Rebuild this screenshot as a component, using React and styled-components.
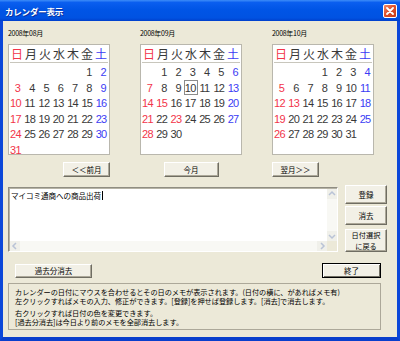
import React from "react";
import styled, { createGlobalStyle } from "styled-components";

const JP = `"Noto Sans CJK JP", "Noto Sans", sans-serif`;

const GlobalStyle = createGlobalStyle`
  body {
    margin: 0;
    background: #ffffff;
    font-family: ${JP};
  }
`;

const HOLIDAYS = {
  "2008-9": [15, 23],
  "2008-10": [13],
};

const WEEK = ["日", "月", "火", "水", "木", "金", "土"];

const buildMonth = (year, month) => {
  const first = new Date(year, month - 1, 1).getDay();
  const last = new Date(year, month, 0).getDate();
  const cells = [];
  for (let i = 0; i < first; i++) cells.push(null);
  for (let d = 1; d <= last; d++) cells.push(d);
  while (cells.length < 42) cells.push(null);
  return cells;
};

const dayTone = (year, month, day, col) => {
  const holidays = HOLIDAYS[`${year}-${month}`] || [];
  if (col === 0 || holidays.includes(day)) return "red";
  if (col === 6) return "blue";
  return "normal";
};

const Calendar = ({ year, month, today, align, button }) => {
  const cells = buildMonth(year, month);
  const mm = String(month).padStart(2, "0");
  return (
    <CalColumn $align={align}>
      <CalLabel>
        {year}年{mm}月
      </CalLabel>
      <CalBox>
        <HeadRow>
          {WEEK.map((w, i) => (
            <HeadCell key={w} $tone={i === 0 ? "red" : i === 6 ? "blue" : "normal"}>
              {w}
            </HeadCell>
          ))}
        </HeadRow>
        <DayGrid>
          {cells.map((d, i) => (
            <DayCell
              key={i}
              $tone={d ? dayTone(year, month, d, i % 7) : "normal"}
              $today={d === today}
            >
              {d || ""}
            </DayCell>
          ))}
        </DayGrid>
      </CalBox>
      <Button $w={button.width} $h={15}>
        {button.label}
      </Button>
    </CalColumn>
  );
};

const Chevron = ({ dir }) => {
  const paths = {
    up: "M2 6 L5 3 L8 6",
    down: "M2 4 L5 7 L8 4",
    left: "M6 2 L3 5 L6 8",
    right: "M4 2 L7 5 L4 8",
  };
  return (
    <svg width="10" height="10" viewBox="0 0 10 10">
      <path d={paths[dir]} fill="none" stroke="#b9c3d6" strokeWidth="1.5" />
    </svg>
  );
};

const App = () => {
  return (
    <React.Fragment>
      <GlobalStyle />
      <Window>
        <TitleBar>
          <TitleText>カレンダー表示</TitleText>
          <CloseButton>
            <svg width="8" height="8" viewBox="0 0 8 8">
              <path d="M1 1 L7 7 M7 1 L1 7" stroke="#fff" strokeWidth="1.8" strokeLinecap="round" />
            </svg>
          </CloseButton>
        </TitleBar>
        <Client>
          <CalendarRow>
            <Calendar year={2008} month={8} align="flex-end" button={{ label: "＜＜前月", width: 47 }} />
            <Calendar year={2008} month={9} today={10} align="center" button={{ label: "今月", width: 55 }} />
            <Calendar year={2008} month={10} align="flex-start" button={{ label: "翌月＞＞", width: 47 }} />
          </CalendarRow>

          <MemoRow>
            <MemoBox>
              <MemoText>
                マイコミ通商への商品出荷<Caret />
              </MemoText>
              <VScroll>
                <ScrollArrow>
                  <Chevron dir="up" />
                </ScrollArrow>
                <ScrollTrack />
                <ScrollArrow>
                  <Chevron dir="down" />
                </ScrollArrow>
              </VScroll>
              <HScroll>
                <ScrollArrow>
                  <Chevron dir="left" />
                </ScrollArrow>
                <ScrollTrack />
                <ScrollArrow>
                  <Chevron dir="right" />
                </ScrollArrow>
              </HScroll>
              <ScrollCorner />
            </MemoBox>
            <SideButtons>
              <Button $w={42} $h={19}>登録</Button>
              <Button $w={42} $h={19}>消去</Button>
              <Button $w={42} $h={23} $gapTop={2} $twoLine>
                <span>日付選択</span>
                <span>に戻る</span>
              </Button>
            </SideButtons>
          </MemoRow>

          <BottomRow>
            <Button $w={77} $h={14}>過去分消去</Button>
            <Button $w={59} $h={15} $default>終了</Button>
          </BottomRow>

          <InfoBox>
            <InfoPara>
              カレンダーの日付にマウスを合わせるとその日のメモが表示されます。(日付の横に、があればメモ有)
              <br />
              左クリックすればメモの入力、修正ができます。[登録]を押せば登録します。[消去]で消去します。
            </InfoPara>
            <InfoPara>
              右クリックすれば日付の色を変更できます。
              <br />
              [過去分消去]は今日より前のメモを全部消去します。
            </InfoPara>
          </InfoBox>
        </Client>
      </Window>
    </React.Fragment>
  );
};

const Window = styled.div`
  display: flex;
  flex-direction: column;
  width: 400px;
  height: 341px;
  box-sizing: border-box;
`;

const TitleBar = styled.div`
  display: flex;
  align-items: center;
  justify-content: space-between;
  height: 21px;
  padding: 0 3px 0 5px;
  box-sizing: border-box;
  background: linear-gradient(
    to bottom,
    #3d8df8 0%,
    #0a5eef 12%,
    #0055e6 45%,
    #0052e2 85%,
    #0040cc 100%
  );
`;

const TitleText = styled.span`
  font-family: ${JP};
  font-size: 8.5px;
  font-weight: bold;
  color: #ffffff;
  text-shadow: 1px 1px 0 #0b2f9c;
  letter-spacing: -0.2px;
`;

const CloseButton = styled.div`
  display: flex;
  align-items: center;
  justify-content: center;
  width: 14px;
  height: 14px;
  box-sizing: border-box;
  border: 1px solid #ffffff;
  border-radius: 2px;
  background: linear-gradient(135deg, #f08a6a 0%, #e0522c 45%, #c33c16 100%);
`;

const Client = styled.div`
  flex: 1;
  display: flex;
  flex-direction: column;
  background: #ece9d8;
  border-left: 3px solid #0b47d9;
  border-right: 3px solid #0b47d9;
  border-bottom: 4px solid #0a3fcc;
  padding: 7px 0 0 5px;
  box-sizing: border-box;
`;

const CalendarRow = styled.div`
  display: grid;
  grid-template-columns: 102px 102px 102px;
  column-gap: 30px;
`;

const CalColumn = styled.div`
  display: flex;
  flex-direction: column;
  align-items: ${p => p.$align};
  & > button {
    margin-top: 7px;
  }
`;

const CalLabel = styled.div`
  align-self: flex-start;
  height: 10px;
  line-height: 10px;
  margin-bottom: 6px;
  font-family: ${JP};
  font-size: 7px;
  letter-spacing: -0.3px;
  color: #000000;
`;

const CalBox = styled.div`
  width: 102px;
  height: 111px;
  box-sizing: border-box;
  background: #ffffff;
  border: 1px solid #b9b7ad;
  overflow: hidden;
`;

const HeadRow = styled.div`
  display: grid;
  grid-template-columns: repeat(7, minmax(0, 1fr));
  height: 17px;
  border-bottom: 1px solid #c8c6bc;
  margin: 0 1px;
`;

const toneColor = {
  red: "#f2354a",
  blue: "#3b3cf4",
  normal: "#383838",
};

const HeadCell = styled.div`
  text-align: center;
  font-family: ${JP};
  font-size: 12px;
  line-height: 17px;
  color: ${p => toneColor[p.$tone]};
`;

const DayGrid = styled.div`
  display: grid;
  grid-template-columns: repeat(7, minmax(0, 1fr));
  grid-auto-rows: 15.5px;
  padding-top: 1px;
`;

const DayCell = styled.div`
  box-sizing: border-box;
  min-width: 0;
  text-align: right;
  padding-right: 2px;
  white-space: nowrap;
  font-family: "Liberation Sans", Arial, sans-serif;
  font-size: 11px;
  letter-spacing: -0.7px;
  line-height: 14px;
  color: ${p => toneColor[p.$tone]};
  border: 1px solid ${p => (p.$today ? "#8c8c8c" : "transparent")};
`;

const Button = styled.button`
  display: flex;
  flex-direction: ${p => (p.$twoLine ? "column" : "row")};
  align-items: center;
  justify-content: center;
  width: ${p => p.$w}px;
  height: ${p => p.$h}px;
  margin-top: ${p => p.$gapTop || 0}px;
  padding: 0;
  box-sizing: border-box;
  background: #f2f0e6;
  font-family: ${JP};
  font-size: ${p => (p.$twoLine ? "7.2px" : "7.5px")};
  line-height: 9px;
  color: #000000;
  border: 1px solid;
  border-color: ${p =>
    p.$default ? "#000000" : "#ffffff #6f6d62 #6f6d62 #ffffff"};
  box-shadow: ${p =>
    p.$default
      ? "inset 1px 1px #ffffff, inset -1px -1px #6f6d62"
      : "inset -1px -1px #aca899"};
  & > span {
    display: block;
    height: 10.5px;
    line-height: 10.5px;
  }
`;

const MemoRow = styled.div`
  display: flex;
  gap: 7px;
  margin-top: 10px;
  height: 67px;
`;

const MemoBox = styled.div`
  display: grid;
  grid-template-columns: 1fr 10px;
  grid-template-rows: 1fr 10px;
  width: 330px;
  height: 65px;
  box-sizing: border-box;
  background: #ffffff;
  border: 1px solid;
  border-color: #8f8d82 #ffffff #ffffff #8f8d82;
  box-shadow: inset 1px 1px #b6b3a5;
  padding: 1px 0 0 1px;
`;

const MemoText = styled.div`
  padding: 2px 1px;
  font-family: ${JP};
  font-size: 7.6px;
  line-height: 10px;
  color: #000000;
  letter-spacing: -0.1px;
`;

const Caret = styled.span`
  display: inline-block;
  width: 1px;
  height: 9px;
  margin-left: 1px;
  vertical-align: -1px;
  background: #000000;
`;

const VScroll = styled.div`
  display: flex;
  flex-direction: column;
  background: #f6f6f1;
`;

const HScroll = styled.div`
  display: flex;
  background: #f6f6f1;
`;

const ScrollArrow = styled.div`
  display: flex;
  align-items: center;
  justify-content: center;
  width: 10px;
  height: 10px;
  background: #f0f0ea;
`;

const ScrollTrack = styled.div`
  flex: 1;
  background: #f8f8f4;
`;

const ScrollCorner = styled.div`
  background: #ece9d8;
`;

const SideButtons = styled.div`
  display: flex;
  flex-direction: column;
  gap: 2px;
  margin-top: -2px;
`;

const BottomRow = styled.div`
  display: flex;
  align-items: center;
  justify-content: space-between;
  width: 366px;
  margin-top: 9px;
  margin-left: 7px;
  height: 15px;
`;

const InfoBox = styled.div`
  width: 373px;
  height: 47px;
  margin-top: 5px;
  box-sizing: border-box;
  border: 1px solid #aca899;
  padding: 4px 6px 0 6px;
`;

const InfoPara = styled.p`
  margin: 0 0 3px 0;
  font-family: ${JP};
  font-size: 7.2px;
  line-height: 9px;
  color: #000000;
  white-space: nowrap;
  letter-spacing: -0.05px;
`;

export default App;
